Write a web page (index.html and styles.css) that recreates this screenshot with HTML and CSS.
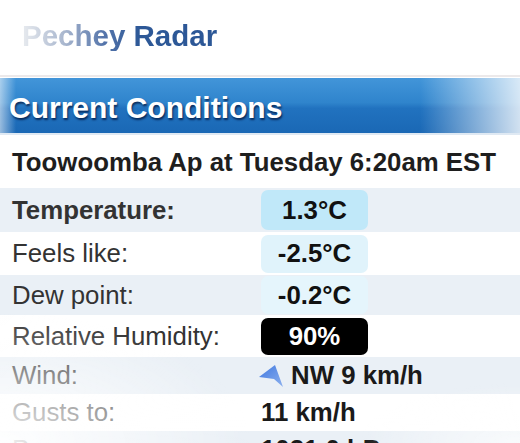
FILE: index.html
```html
<!DOCTYPE html>
<html lang="en">
<head>
  <meta charset="UTF-8">
  <meta name="viewport" content="width=device-width, initial-scale=1.0">
  <title>Pechey Radar - Current Conditions</title>
  <link rel="stylesheet" href="styles.css">
</head>
<body>

  <header class="logo">
    <span class="logo-text">Pechey Radar</span>
  </header>

  <main>
    <h1 class="bar">Current Conditions</h1>

    <p class="station">Toowoomba Ap at Tuesday 6:20am EST</p>

    <!-- Observations table -->
    <section class="obs">
      <div class="row tall stripe">
        <span class="label bold">Temperature:</span>
        <span class="pill temp">1.3°C</span>
      </div>
      <div class="row mid">
        <span class="label">Feels like:</span>
        <span class="pill soft">-2.5°C</span>
      </div>
      <div class="row low stripe">
        <span class="label">Dew point:</span>
        <span class="pill softer">-0.2°C</span>
      </div>
      <div class="row">
        <span class="label">Relative Humidity:</span>
        <span class="pill dark">90%</span>
      </div>
      <div class="row short stripe">
        <span class="label">Wind:</span>
        <span class="value">
          <svg class="arrow" width="26" height="24" viewBox="0 0 26 24">
            <defs>
              <linearGradient id="arrowFill" x1="0" y1="0" x2="1" y2="1">
                <stop offset="0" stop-color="#3f78e0"/>
                <stop offset="1" stop-color="#8cb0ee"/>
              </linearGradient>
            </defs>
            <polygon points="1,13 17,1 25,23 16,15" fill="url(#arrowFill)"/>
          </svg>
          NW 9 km/h
        </span>
      </div>
      <div class="row short">
        <span class="label">Gusts to:</span>
        <span class="value">11 km/h</span>
      </div>
      <div class="row short stripe">
        <span class="label">Pressure:</span>
        <span class="value">1021.0 hPa</span>
      </div>
    </section>
  </main>

  <div class="fade"></div>

</body>
</html>
```

FILE: styles.css
```css
/* General Styling */
body {
  font-family: "Liberation Sans", Arial, sans-serif;
  margin: 0;
  padding: 0;
  background: #fff;
  color: #333;
  overflow: hidden;
}

/* Logo */
.logo {
  box-sizing: border-box;
  height: 77px;
  padding: 21px 0 0 22px;
  border-bottom: 2px solid #ece9ea;
}

.logo-text {
  display: inline-block;
  font-size: 29.5px;
  font-weight: bold;
  line-height: 30px;
  background: linear-gradient(to right, #e8ebef 0%, #a8b6ce 22%, #5575ab 42%, #2d5897 60%, #2c5796 100%);
  -webkit-background-clip: text;
  background-clip: text;
  color: transparent;
}

/* Section bar */
.bar {
  box-sizing: border-box;
  height: 57px;
  margin: 1px 0 0;
  padding: 4px 0 0 9px;
  font-size: 30px;
  line-height: 51px;
  color: #fff;
  text-shadow: 1px 2px 2px rgba(0, 20, 60, 0.75);
  background:
    linear-gradient(to right, rgba(255, 255, 255, 0.55) 0, rgba(255, 255, 255, 0) 16px, rgba(255, 255, 255, 0) 420px, rgba(255, 255, 255, 0.8) 520px),
    linear-gradient(to bottom, #4295d9 0%, #2f84cc 45%, #2172bf 55%, #1a68b5 100%);
  border-bottom: 2px solid #dfe9f3;
}

/* Station line */
.station {
  box-sizing: border-box;
  height: 53px;
  margin: 0;
  padding: 13px 12px 0;
  font-size: 25.8px;
  font-weight: bold;
  line-height: 29px;
  color: #1e1e1e;
  white-space: nowrap;
}

/* Rows */
.obs {
  font-size: 25.8px;
}

.row {
  display: flex;
  align-items: center;
  height: 42px;
  padding-left: 12px;
}

.row.tall {
  height: 44px;
}

.row.mid {
  height: 43px;
}

.row.low {
  height: 40px;
}

.row.short {
  height: 37px;
}

.row.stripe {
  background: #eaf0f6;
}

.label {
  flex: 0 0 249px;
  white-space: nowrap;
}

.bold {
  font-weight: bold;
}

.pill {
  width: 107px;
  height: 38px;
  border-radius: 7px;
  display: flex;
  align-items: center;
  justify-content: center;
  font-weight: bold;
  color: #111;
}

.pill.temp {
  height: 40px;
  background: #c0e8f9;
}

.pill.soft {
  background: #e0f3fb;
}

.pill.softer {
  background: #e5f5fc;
}

.pill.dark {
  height: 37px;
  background: #000;
  color: #fff;
}

.value {
  display: flex;
  align-items: center;
  font-weight: bold;
  color: #1a1a1a;
  white-space: nowrap;
}

.arrow {
  margin: 0 7px 0 -3px;
}

/* Edge fading */
.fade {
  position: fixed;
  top: 0;
  left: 0;
  right: 0;
  bottom: 0;
  pointer-events: none;
  background:
    radial-gradient(ellipse 250px 130px at 0% 100%, rgba(255, 255, 255, 0.95) 0%, rgba(255, 255, 255, 0.6) 40%, rgba(255, 255, 255, 0) 100%),
    radial-gradient(ellipse 160px 60px at 100% 100%, rgba(255, 255, 255, 0.7) 0%, rgba(255, 255, 255, 0) 100%);
}
```
